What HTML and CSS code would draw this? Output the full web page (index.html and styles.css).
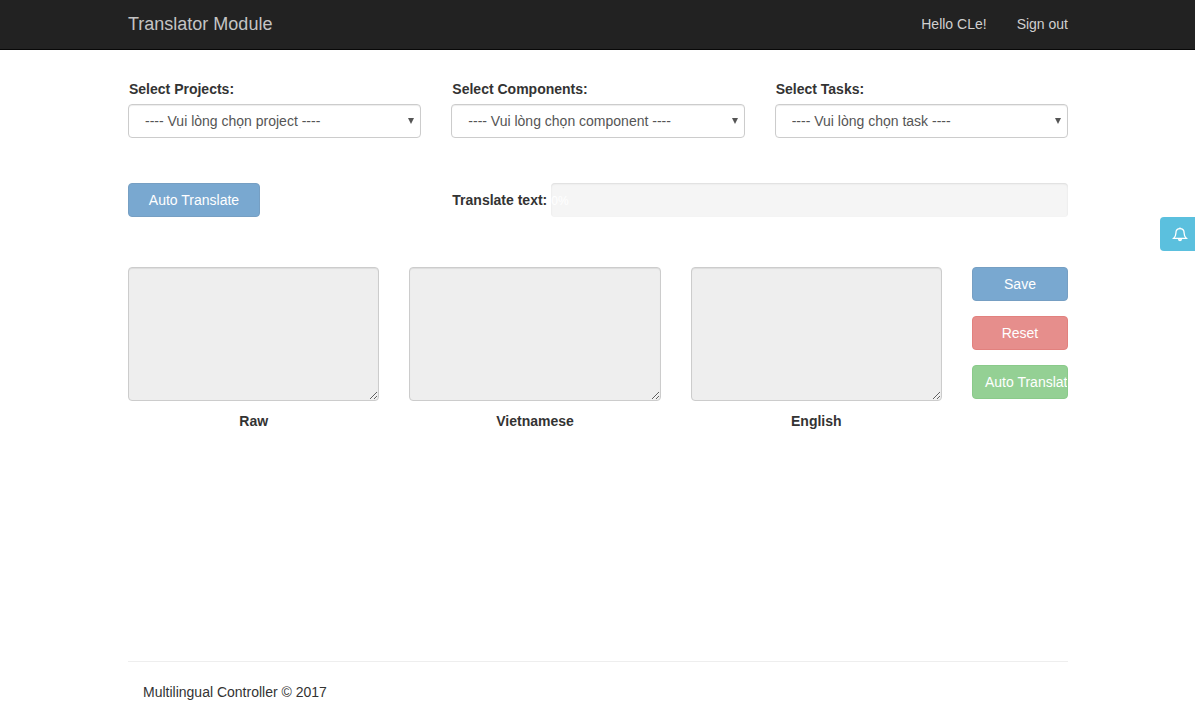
FILE: index.html
```html
<!DOCTYPE html>
<html lang="en">
<head>
    <meta charset="UTF-8">
    <title>Translator Module</title>
    <link rel="stylesheet" href="styles.css">
</head>
<body>
<nav class="navbar">
    <div class="container navbar-inner">
        <a class="brand" href="#">Translator Module</a>
        <ul class="nav-links">
            <li><a href="#">Hello CLe!</a></li>
            <li><a href="#">Sign out</a></li>
        </ul>
    </div>
</nav>

<div class="container">
    <div class="select-row">
        <div class="select-group">
            <label for="project">Select Projects:</label>
            <div class="select-wrap">
                <select id="project" class="form-control">
                    <option>---- Vui lòng chọn project ----</option>
                </select>
            </div>
        </div>
        <div class="select-group">
            <label for="component">Select Components:</label>
            <div class="select-wrap">
                <select id="component" class="form-control">
                    <option>---- Vui lòng chọn component ----</option>
                </select>
            </div>
        </div>
        <div class="select-group">
            <label for="task">Select Tasks:</label>
            <div class="select-wrap">
                <select id="task" class="form-control">
                    <option>---- Vui lòng chọn task ----</option>
                </select>
            </div>
        </div>
    </div>

    <div class="progress-row">
        <div class="progress-left">
            <button class="btn btn-primary" disabled>Auto Translate</button>
        </div>
        <div class="progress-right">
            <label>Translate text:</label>
            <div class="progress"><span class="progress-text">0%</span></div>
        </div>
    </div>

    <div class="editor-row">
        <div class="editor">
            <textarea class="form-control text-box" disabled></textarea>
            <label>Raw</label>
        </div>
        <div class="editor">
            <textarea class="form-control text-box" disabled></textarea>
            <label>Vietnamese</label>
        </div>
        <div class="editor">
            <textarea class="form-control text-box" disabled></textarea>
            <label>English</label>
        </div>
        <div class="actions">
            <button class="btn btn-primary" disabled>Save</button>
            <button class="btn btn-danger" disabled>Reset</button>
            <button class="btn btn-success" disabled>Auto Translate</button>
        </div>
    </div>

    <footer class="footer">
        <p>Multilingual Controller © 2017</p>
    </footer>
</div>

<a class="notify" href="#">
    <svg width="16" height="16" viewBox="0 0 16 16" fill="none" stroke="#fff" stroke-width="1.3">
        <path d="M1.700 12.300c1.500-1.300 2.200-2.600 2.200-5.300 0-2.600 1.700-4.400 4.100-4.400s4.100 1.800 4.100 4.400c0 2.700.7 4 2.200 5.300z"/>
        <path d="M6.500 13.200c.2 1 .8 1.500 1.500 1.500s1.300-.5 1.500-1.500" fill="#fff"/>
        <path d="M8 1.500v1.200"/>
    </svg>
</a>
</body>
</html>
```

FILE: styles.css
```css
*{
    box-sizing: border-box;
}
html, body{
    margin: 0;
    padding: 0;
}
body{
    font-family: "Liberation Sans", Arial, sans-serif;
    font-size: 14px;
    line-height: 20px;
    color: #333;
    background-color: #fff;
}
a{
    text-decoration: none;
}
label{
    font-weight: bold;
}
.container{
    width: 940px;
    margin-left: 128px;
}

/* navbar */
.navbar{
    height: 50px;
    background-color: #222;
    border-bottom: 1px solid #080808;
}
.navbar-inner{
    display: flex;
    justify-content: space-between;
    align-items: center;
    height: 47px;
}
.brand{
    font-size: 18px;
    color: #c4c4c4;
}
.nav-links{
    display: flex;
    gap: 30px;
    list-style: none;
    margin: 0;
    padding: 0;
}
.nav-links a{
    color: #d0d0d0;
}

/* form controls */
.form-control{
    display: block;
    width: 100%;
    height: 34px;
    padding: 6px 12px;
    font-family: inherit;
    font-size: 14px;
    line-height: 20px;
    color: #555;
    background-color: #fff;
    border: 1px solid #ccc;
    border-radius: 4px;
    box-shadow: inset 0 1px 1px rgba(0,0,0,.075);
}
select.form-control{
    appearance: none;
    padding-left: 16px;
}
.select-row{
    display: grid;
    grid-template-columns: repeat(3, 1fr);
    gap: 30px;
    padding-top: 29px;
}
.select-group label{
    display: block;
    height: 25px;
    padding-left: 1px;
}
.select-wrap{
    position: relative;
}
/* arrow sits over the select */
.select-wrap::after{
    content: "";
    position: absolute;
    top: 14px;
    right: 7px;
    border-top: 6px solid #555;
    border-left: 3px solid transparent;
    border-right: 3px solid transparent;
    pointer-events: none;
}

/* buttons */
.btn{
    display: block;
    height: 34px;
    padding: 6px 12px;
    overflow: hidden;
    font-family: inherit;
    font-size: 14px;
    line-height: 20px;
    white-space: nowrap;
    color: #fff;
    border: 1px solid transparent;
    border-radius: 4px;
    opacity: .65;
}
.progress-left .btn{
    width: 132px;
}
.btn-primary{
    background-color: #337ab7;
    border-color: #2e6da4;
}
.btn-danger{
    background-color: #d9534f;
    border-color: #d43f3a;
}
.btn-success{
    background-color: #5cb85c;
    border-color: #4cae4c;
}

/* progress */
.progress-row{
    display: grid;
    grid-template-columns: repeat(3, 1fr);
    column-gap: 30px;
    margin-top: 45px;
}
.progress-right{
    grid-column: span 2;
    display: flex;
    align-items: center;
    padding-left: 1px;
}
.progress-right label{
    width: 99px;
    flex: none;
}
.progress{
    flex: 1;
    height: 34px;
    line-height: 34px;
    background-color: #f5f5f5;
    border-radius: 4px;
    box-shadow: inset 0 1px 2px rgba(0,0,0,.1);
}
.progress-text{
    font-size: 12px;
    color: #fff;
}

/* editors */
.editor-row{
    display: grid;
    grid-template-columns: 1fr 1fr 1fr 96px;
    gap: 30px;
    margin-top: 50px;
}
.editor label{
    display: block;
    margin-top: 10px;
    text-align: center;
}
.text-box{
    height: 134px;
    background-color: #eee;
    resize: both;
}
.actions{
    display: flex;
    flex-direction: column;
    gap: 15px;
}
.actions .btn{
    width: 96px;
}

/* footer */
.footer{
    margin-top: 230px;
    padding: 20px 15px 0;
    border-top: 1px solid #eee;
}
.footer p{
    margin: 0;
}

/* notification tab */
.notify{
    position: absolute;
    top: 217px;
    right: 0;
    display: flex;
    justify-content: center;
    align-items: center;
    width: 35px;
    height: 34px;
    padding-left: 5px;
    background-color: #5bc0de;
    border-radius: 4px 0 0 4px;
}
```
